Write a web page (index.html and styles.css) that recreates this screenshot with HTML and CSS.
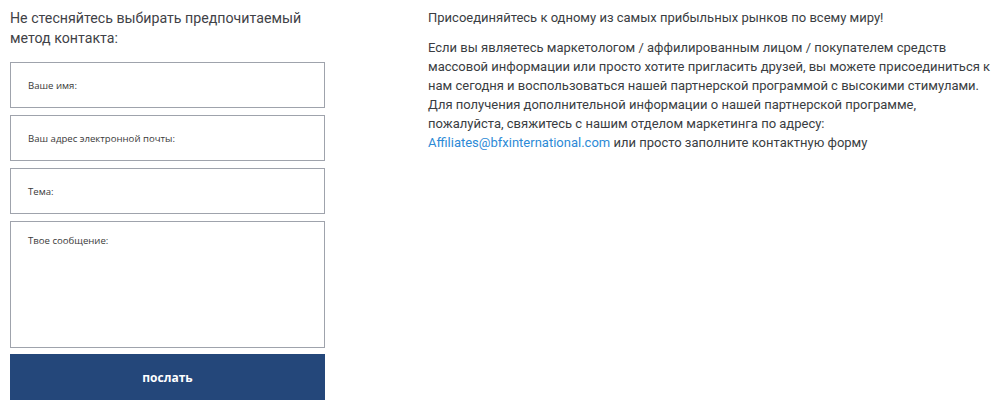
FILE: index.html
```html
<!DOCTYPE html>
<html lang="ru">
<head>
<meta charset="utf-8">
<link rel="stylesheet" href="styles.css">
</head>
<body>
<div class="page">
  <div class="form-col">
    <p class="intro">Не стесняйтесь выбирать предпочитаемый<br>метод контакта:</p>
    <form class="form">
      <div class="field"><span class="ph">Ваше имя:</span></div>
      <div class="field"><span class="ph">Ваш адрес электронной почты:</span></div>
      <div class="field"><span class="ph">Тема:</span></div>
      <div class="field area"><span class="ph">Твое сообщение:</span></div>
      <div class="btn">послать</div>
    </form>
  </div>
  <div class="text-col">
    <p class="lead">Присоединяйтесь к одному из самых прибыльных рынков по всему миру!</p>
    <p class="body">Если вы являетесь маркетологом / аффилированным лицом / покупателем средств<br>массовой информации или просто хотите пригласить друзей, вы можете присоединиться к<br>нам сегодня и воспользоваться нашей партнерской программой с высокими стимулами.<br>Для получения дополнительной информации о нашей партнерской программе,<br>пожалуйста, свяжитесь с нашим отделом маркетинга по адресу:<br><a class="mail" href="#">Affiliates@bfxinternational.com</a> или просто заполните контактную форму</p>
  </div>
</div>
</body>
</html>
```

FILE: styles.css
```css
html, body {
  margin: 0;
  padding: 0;
  background: #fff;
}
body {
  font-family: Roboto, "Noto Sans", sans-serif;
  color: #3a3d42;
}
.page {
  display: flex;
  padding: 8px 0 0 10px;
}
.form-col {
  width: 315px;
  flex: none;
}
.intro {
  margin: 0;
  font-size: 14.2px;
  line-height: 20px;
  white-space: nowrap;
  color: #3f4247;
}
.form {
  margin-top: 14px;
  display: flex;
  flex-direction: column;
  gap: 7px;
}
.field {
  height: 46px;
  box-sizing: border-box;
  border: 1px solid #9fa3ac;
  display: flex;
  align-items: center;
  padding-left: 17px;
}
.field.area {
  height: 127px;
  align-items: flex-start;
  padding-top: 12px;
}
.ph {
  font-family: "Open Sans", "DejaVu Sans", sans-serif;
  font-size: 9.6px;
  color: #3a3a3a;
}
.btn {
  margin-top: -1px;
  height: 46px;
  background: #24477a;
  color: #fff;
  font-family: "Open Sans", sans-serif;
  font-weight: 700;
  font-size: 12px;
  display: flex;
  align-items: center;
  justify-content: center;
}
.text-col {
  margin-left: 103px;
  flex: none;
}
.lead {
  margin: 0 0 10px;
  font-size: 13px;
  line-height: 19px;
  white-space: nowrap;
  color: #3a3d42;
}
.body {
  margin: 0;
  padding-top: 1px;
  font-size: 13px;
  line-height: 19px;
  white-space: nowrap;
  color: #3a3d42;
}
.mail {
  color: #2c8ad6;
  text-decoration: none;
}
```
